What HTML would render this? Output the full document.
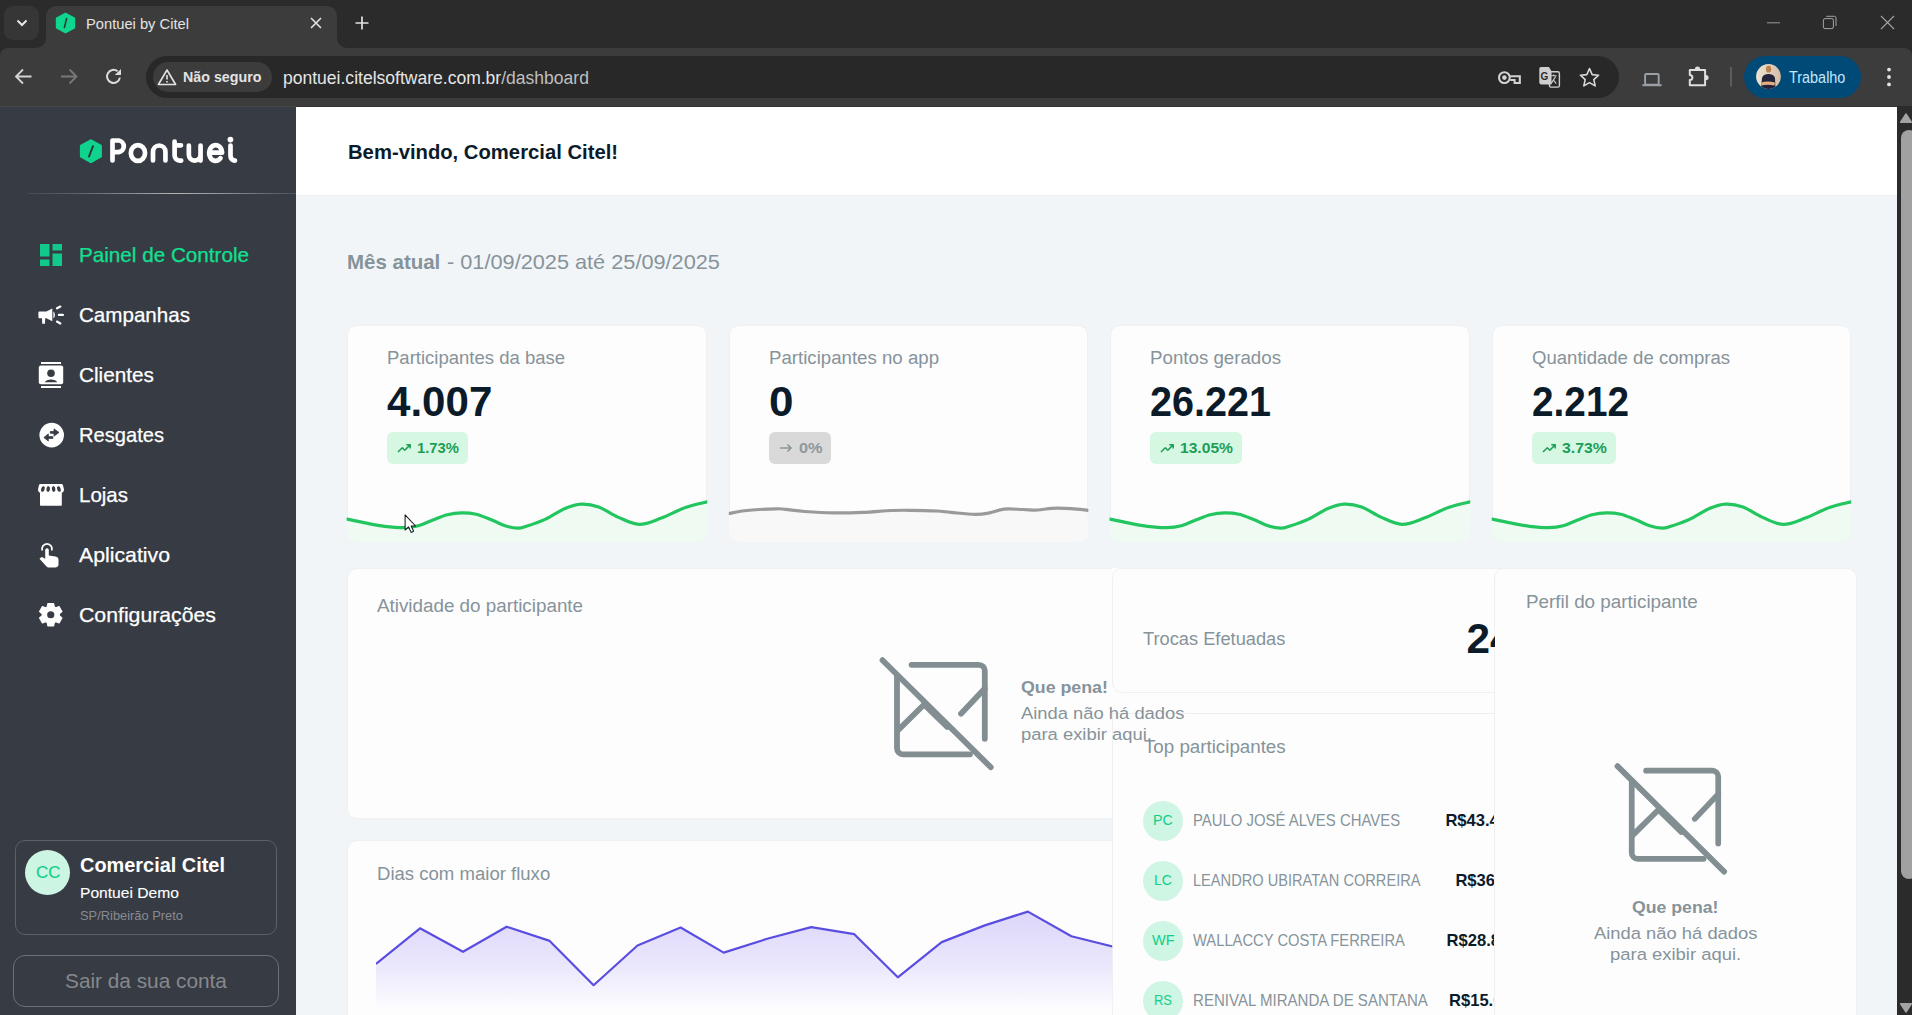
<!DOCTYPE html>
<html><head><meta charset="utf-8"><title>Pontuei by Citel</title>
<style>
html,body{margin:0;padding:0;width:1912px;height:1015px;overflow:hidden;background:#2b2b2b;font-family:"Liberation Sans",sans-serif;}
.a{position:absolute;}
.t{position:absolute;white-space:pre;}
svg{overflow:visible;}
</style></head><body>
<div class="a" style="left:0.00px;top:0.00px;width:1912.00px;height:48.00px;background:#2b2b2b;"></div>
<div class="a" style="left:4.00px;top:6.00px;width:35.00px;height:34.00px;background:#363636;border-radius:9px;"></div>
<svg class="a" style="left:14px;top:16px" width="16" height="14" viewBox="0 0 16 14"><path d="M3.5 4.5 L8 9 L12.5 4.5" fill="none" stroke="#e6e6e6" stroke-width="2"/></svg>
<div class="a" style="left:46.00px;top:6.00px;width:291.00px;height:42.00px;background:#3c3c3c;border-radius:10px 10px 0 0;"></div>
<svg class="a" style="left:36px;top:38px" width="10" height="10" viewBox="0 0 10 10"><path d="M0 10 A10 10 0 0 0 10 0 V10 Z" fill="#3c3c3c"/></svg>
<svg class="a" style="left:337px;top:38px" width="10" height="10" viewBox="0 0 10 10"><path d="M10 10 A10 10 0 0 1 0 0 V10 Z" fill="#3c3c3c"/></svg>
<svg class="a" style="left:55px;top:12px" width="21" height="22" viewBox="0 0 21 22"><path d="M10.5 1.6 L19.3 6.4 V15.6 L10.5 20.4 L1.7 15.6 V6.4 Z" fill="#0fd68f" stroke="#0fd68f" stroke-width="1.8" stroke-linejoin="round"/><path d="M11.6 6.5 L9.4 15.5" stroke="#2d3a36" stroke-width="1.6" stroke-linecap="round"/></svg>
<div class="t" style="left:86.00px;top:17.39px;font-size:14.60px;line-height:14.60px;color:#e3e3e3;transform:scaleX(1.0073);transform-origin:left top;">Pontuei by Citel</div>
<svg class="a" style="left:309px;top:16px" width="14" height="14" viewBox="0 0 14 14"><path d="M2 2 L12 12 M12 2 L2 12" stroke="#e3e3e3" stroke-width="1.6"/></svg>
<svg class="a" style="left:354px;top:15px" width="16" height="16" viewBox="0 0 16 16"><path d="M8 1.5 V14.5 M1.5 8 H14.5" stroke="#e3e3e3" stroke-width="1.7"/></svg>
<svg class="a" style="left:1760px;top:10px" width="140" height="26" viewBox="0 0 140 26"><path d="M7 12.8 H20" stroke="#9a9a9a" stroke-width="1"/><rect x="63.4" y="8.6" width="10" height="10" rx="1.6" fill="none" stroke="#a0a4a8" stroke-width="1"/><path d="M66.2 6.3 H74.4 A1.6 1.6 0 0 1 76 7.9 V16" fill="none" stroke="#a0a4a8" stroke-width="1"/><path d="M121 6 L134 19 M134 6 L121 19" stroke="#a0a4a8" stroke-width="1.1"/></svg>
<div class="a" style="left:0.00px;top:48.00px;width:1912.00px;height:58.00px;background:#3c3c3c;border-radius:8px 8px 0 0;"></div>
<svg class="a" style="left:12px;top:65px" width="130" height="24" viewBox="0 0 130 24"><path d="M19.5 11.5 H4.5 M11 4.5 L4 11.5 L11 18.5" fill="none" stroke="#d4d4d4" stroke-width="1.8"/><path d="M49 11.5 H64 M57.5 4.5 L64.5 11.5 L57.5 18.5" fill="none" stroke="#787878" stroke-width="1.8"/><path d="M107.9 12.6 A6.5 6.5 0 1 1 105.6 6.3" fill="none" stroke="#dcdcdc" stroke-width="2"/><path d="M109 4.1 V10 H102.8 Z" fill="#dcdcdc"/></svg>
<div class="a" style="left:146.00px;top:56.00px;width:1473.00px;height:42.00px;background:#282828;border-radius:21px;"></div>
<div class="a" style="left:152.50px;top:62.00px;width:119.50px;height:30.00px;background:#3c3c3c;border-radius:15px;"></div>
<svg class="a" style="left:157px;top:68px" width="20" height="18" viewBox="0 0 20 18"><path d="M10 2 L18.6 16.5 H1.4 Z" fill="none" stroke="#e3e3e3" stroke-width="1.6" stroke-linejoin="round"/><path d="M10 7 V11.5 M10 13 V14.6" stroke="#e3e3e3" stroke-width="1.6"/></svg>
<div class="t" style="left:183.00px;top:69.38px;font-size:15.20px;line-height:15.20px;color:#e3e3e3;font-weight:700;transform:scaleX(0.9388);transform-origin:left top;">Não seguro</div>
<div class="t" style="left:283.00px;top:69.95px;font-size:17.60px;line-height:17.60px;color:#e6e6e6;transform:scaleX(0.9961);transform-origin:left top;">pontuei.citelsoftware.com.br<span style="color:#bfbfbf">/dashboard</span></div>
<svg class="a" style="left:0;top:0" width="1912" height="106" viewBox="0 0 1912 106"><g fill="none" stroke="#d2d2d2" stroke-width="2.1"><circle cx="1504.4" cy="77.6" r="5.4"/><path d="M1510.2 76.2 H1519.8 V83 H1514.6 V80 H1510.2"/></g><circle cx="1504.4" cy="77.6" r="2.3" fill="#d2d2d2"/><path d="M1541 67 H1549 L1551.5 71.2 V84.4 H1541 A1.8 1.8 0 0 1 1539.3 82.6 V68.8 A1.8 1.8 0 0 1 1541 67 Z" fill="#cfcfcf"/><text x="1540.6" y="80.3" font-family="Liberation Sans" font-weight="700" font-size="10" fill="#2b2b2b">G</text><rect x="1549.4" y="71.8" width="10" height="15.3" rx="1.6" fill="none" stroke="#cfcfcf" stroke-width="1.4"/><path d="M1550.6 75.8 H1556.6 M1553.6 74.4 V75.8 M1551.2 83.4 L1555.6 76.6 M1553.2 79.6 L1556.2 83.6" fill="none" stroke="#cfcfcf" stroke-width="1.1"/><path d="M1589.5 68.6 L1592.2 74.6 L1598.6 75.2 L1593.8 79.6 L1595.2 85.9 L1589.5 82.6 L1583.8 85.9 L1585.2 79.6 L1580.4 75.2 L1586.8 74.6 Z" fill="none" stroke="#d8d8d8" stroke-width="1.6" stroke-linejoin="round"/><rect x="1645.1" y="74" width="13.6" height="10.6" rx="1.2" fill="none" stroke="#9aa0a6" stroke-width="1.9"/><path d="M1642.4 85.2 H1661.6" stroke="#9aa0a6" stroke-width="2"/><path d="M1689.8 69.9 H1705.1 V85.2 H1689.8 V80.1 A2.6 2.6 0 0 0 1689.8 74.9 Z" fill="none" stroke="#dedede" stroke-width="2" stroke-linejoin="round"/><path d="M1694.9 69 A2.6 2.6 0 0 1 1700.1 69 Z M1706 74.9 A2.6 2.6 0 0 1 1706 80.1 Z" fill="#dedede"/><path d="M1731 67 V86.4" stroke="#5a5f63" stroke-width="1.9"/></svg>
<div class="a" style="left:1743.60px;top:55.70px;width:117.00px;height:42.00px;background:#004a77;border-radius:21px;"></div>
<svg class="a" style="left:1756px;top:63.6px" width="25" height="25" viewBox="0 0 25 25"><defs><clipPath id="av"><circle cx="12.5" cy="12.5" r="12.4"/></clipPath><linearGradient id="avg" x1="0" x2="1"><stop offset="0" stop-color="#ece3d2"/><stop offset="1" stop-color="#d6bea6"/></linearGradient></defs><g clip-path="url(#av)"><rect width="25" height="25" fill="url(#avg)"/><path d="M5 25 L6 14 C7 11 9 10 12.5 10 C16 10 18 11 19 14 L19.5 25 Z" fill="#23243a"/><ellipse cx="12.6" cy="5.2" rx="2.6" ry="3.4" fill="#b9824e"/><path d="M5.5 18.5 C9 17 14 17 19 18.6 L18.5 21.5 C14 20.5 9 20.5 5.5 21.5 Z" fill="#e0ae82"/></g></svg>
<div class="t" style="left:1789.00px;top:69.64px;font-size:15.60px;line-height:15.60px;color:#c2e7ff;transform:scaleX(0.9247);transform-origin:left top;">Trabalho</div>
<svg class="a" style="left:1882px;top:66px" width="14" height="22" viewBox="0 0 14 22"><circle cx="7" cy="3.6" r="1.9" fill="#e3e3e3"/><circle cx="7" cy="11" r="1.9" fill="#e3e3e3"/><circle cx="7" cy="18.4" r="1.9" fill="#e3e3e3"/></svg>
<div class="a" style="left:0.00px;top:106.00px;width:296.00px;height:909.00px;background:#373b44;"></div>
<div class="a" style="left:0.00px;top:106.00px;width:296.00px;height:1.00px;background:#454847;"></div>
<svg class="a" style="left:79px;top:139px" width="24" height="25" viewBox="0 0 24 25"><path d="M11.9 1.6 L21.6 6.9 V17.4 L11.9 22.8 L2.2 17.4 V6.9 Z" fill="#10d38e" stroke="#10d38e" stroke-width="2.6" stroke-linejoin="round"/><path d="M14 7.2 L10 17.5" stroke="#2b3b3a" stroke-width="2" stroke-linecap="round"/></svg>
<svg class="a" style="left:0;top:0" width="300" height="200" viewBox="0 0 300 200"><g fill="none" stroke="#ffffff" stroke-width="4.7" stroke-linecap="round" stroke-linejoin="round"><path d="M112.5 160.5 V140.5 H118.7 A5.85 5.85 0 0 1 118.7 152.1 H112.5"/><ellipse cx="137.95" cy="153" rx="7.1" ry="7.9"/><path d="M153 160.5 V152 A6.22 6.5 0 0 1 165.45 152 V160.5"/><path d="M174.6 141.5 V155.6 A5 5 0 0 0 179.6 160.6 H181.2 M174.6 145.35 H181"/><path d="M188.85 145.6 V154.8 A5.85 5.85 0 0 0 200.55 154.8 V145.6 M200.55 154.8 V160.6"/><path d="M209.3 152.7 H222.1 A6.45 7.9 0 1 0 220.5 158.2"/><path d="M230.5 145.6 V156.1 A4.5 4.5 0 0 0 235 160.6"/></g><circle cx="230.4" cy="139.6" r="2.9" fill="#fff"/></svg>
<div class="a" style="left:27.00px;top:193.00px;width:269.00px;height:1.00px;background:linear-gradient(90deg, #464a50, #5d666c 20%, #8a9294 40%, #b4b4b4 55%, #8f9a9c 72%, #5f686e 90%, #4e555b);"></div>
<div class="t" style="left:78.60px;top:244.37px;font-size:21.00px;line-height:21.00px;color:#10e090;transform:scaleX(0.9839);transform-origin:left top;-webkit-text-stroke:0.25px #10e090;">Painel de Controle</div>
<div class="t" style="left:78.60px;top:304.37px;font-size:21.00px;line-height:21.00px;color:#ffffff;transform:scaleX(0.9803);transform-origin:left top;-webkit-text-stroke:0.25px #ffffff;">Campanhas</div>
<div class="t" style="left:78.60px;top:364.37px;font-size:21.00px;line-height:21.00px;color:#ffffff;transform:scaleX(0.9885);transform-origin:left top;-webkit-text-stroke:0.25px #ffffff;">Clientes</div>
<div class="t" style="left:78.60px;top:424.37px;font-size:21.00px;line-height:21.00px;color:#ffffff;transform:scaleX(0.9581);transform-origin:left top;-webkit-text-stroke:0.25px #ffffff;">Resgates</div>
<div class="t" style="left:78.60px;top:484.37px;font-size:21.00px;line-height:21.00px;color:#ffffff;transform:scaleX(0.9760);transform-origin:left top;-webkit-text-stroke:0.25px #ffffff;">Lojas</div>
<div class="t" style="left:78.60px;top:544.37px;font-size:21.00px;line-height:21.00px;color:#ffffff;transform:scaleX(1.0125);transform-origin:left top;-webkit-text-stroke:0.25px #ffffff;">Aplicativo</div>
<div class="t" style="left:78.60px;top:604.37px;font-size:21.00px;line-height:21.00px;color:#ffffff;transform:scaleX(1.0117);transform-origin:left top;-webkit-text-stroke:0.25px #ffffff;">Configurações</div>
<svg class="a" style="left:40px;top:244px" width="22" height="22" viewBox="0 0 22 22" fill="#10c98a"><rect x="0" y="0" width="9.5" height="12.5"/><rect x="12.5" y="0" width="9.5" height="6.5"/><rect x="0" y="15.5" width="9.5" height="6.5"/><rect x="12.5" y="9.5" width="9.5" height="12.5"/></svg>
<svg class="a" style="left:0;top:0" width="300" height="700"><g fill="#ffffff"><path d="M39.4 311.6 H46.4 L52.3 308.6 V321.3 L46.4 318.3 H39.4 A1 1 0 0 1 38.4 317.3 V312.6 A1 1 0 0 1 39.4 311.6 Z"/><path d="M42 317.8 H45.2 L45 323.7 H42.2 Z"/><path d="M53.4 311.4 C55 312.5 55.8 316.5 53.4 318.6 Z"/></g><g stroke="#ffffff" stroke-width="2.3" stroke-linecap="round"><path d="M57 308.3 L60.3 306.6"/><path d="M58.9 314.9 H62.9"/><path d="M57 321.6 L60.3 323.4"/></g></svg>
<svg class="a" style="left:0;top:0" width="300" height="700"><g fill="#ffffff"><rect x="41" y="362" width="20" height="2"/><rect x="41" y="386" width="20" height="2"/><rect x="38.8" y="365.6" width="24.4" height="18.6" rx="2"/></g><circle cx="51" cy="373.3" r="3.8" fill="#373b44"/><path d="M44.8 382.3 C45.8 380.2 48 379.4 51 379.4 C54 379.4 56.2 380.2 57.2 382.3 Z" fill="#373b44"/></svg>
<svg class="a" style="left:38.5px;top:422px" width="25" height="26" viewBox="0 0 25 26"><circle cx="12.7" cy="13.1" r="12.3" fill="#ffffff"/><g fill="#373b44" stroke="#373b44" stroke-linejoin="round" stroke-width="0.8"><path d="M11.3 9.5 H15.8 V11.3 H11.3 Z"/><path d="M20 10.4 L15 6.9 V14.1 Z"/><path d="M9.3 14.6 H13.9 V16.4 H9.3 Z"/><path d="M4.9 15.5 L9.3 11.9 V19 Z"/></g></svg>
<svg class="a" style="left:0;top:0" width="300" height="700"><g fill="#ffffff"><path d="M40.5 484 H61.4 A1.6 1.6 0 0 1 62.9 485 L64 489.5 C64 491.5 62.6 493 60.8 493 H41.2 C39.4 493 38 491.5 38 489.5 L39 485 A1.6 1.6 0 0 1 40.5 484 Z"/><rect x="40" y="492.5" width="21.8" height="13.3" rx="0.8"/></g><g fill="#373b44"><ellipse cx="42.9" cy="489" rx="1.75" ry="2.9" transform="rotate(18 42.9 489)"/><ellipse cx="48.2" cy="489" rx="1.75" ry="2.9" transform="rotate(8 48.2 489)"/><ellipse cx="53.6" cy="489" rx="1.75" ry="2.9" transform="rotate(-8 53.6 489)"/><ellipse cx="58.9" cy="489" rx="1.75" ry="2.9" transform="rotate(-18 58.9 489)"/></g></svg>
<svg class="a" style="left:38px;top:541.5px" width="24" height="27" viewBox="0 0 24 27"><path d="M4.3 8.5 A5 5 0 1 1 13.7 8.5" fill="none" stroke="#ffffff" stroke-width="1.8"/><path d="M7.2 8 A1.8 1.8 0 0 1 10.8 8 V13.5 L17.5 14.5 C19.5 14.8 20.5 16 20.5 18 V22.5 C20.5 24.5 19 25.5 17 25.5 H11 C9.8 25.5 9 25 8.3 24.2 L1.5 16.8 L2.8 15.6 C3.5 15 4.5 15 5.2 15.5 L7.2 17 Z" fill="#ffffff"/></svg>
<svg class="a" style="left:0;top:0" width="300" height="700"><polygon points="47.88,603.51 53.62,603.51 54.26,606.90 55.80,607.79 59.05,606.64 61.92,611.62 59.30,613.86 59.30,615.64 61.92,617.88 59.05,622.86 55.80,621.71 54.26,622.60 53.62,625.99 47.88,625.99 47.24,622.60 45.70,621.71 42.45,622.86 39.58,617.88 42.20,615.64 42.20,613.86 39.58,611.62 42.45,606.64 45.70,607.79 47.24,606.90" fill="#ffffff" stroke="#ffffff" stroke-width="1.2" stroke-linejoin="round"/><circle cx="50.75" cy="614.75" r="3.6" fill="#373b44"/></svg>
<div class="a" style="left:15.00px;top:840.20px;width:261.60px;height:95.00px;background:transparent;border:1px solid #5b6069;border-radius:10px;box-sizing:border-box;"></div>
<div class="a" style="left:25px;top:850px;width:45px;height:45px;border-radius:50%;background:#cdf5e3;"></div>
<div class="t" style="left:35.50px;top:865.42px;font-size:16.57px;line-height:16.57px;color:#12cf89;transform:scaleX(1.0236);transform-origin:left top;-webkit-text-stroke:0.2px #12cf89;">CC</div>
<div class="t" style="left:80.30px;top:854.94px;font-size:20.57px;line-height:20.57px;color:#ffffff;font-weight:700;transform:scaleX(0.9682);transform-origin:left top;">Comercial Citel</div>
<div class="t" style="left:80.30px;top:885.43px;font-size:15.14px;line-height:15.14px;color:#ffffff;transform:scaleX(1.0317);transform-origin:left top;-webkit-text-stroke:0.12px #ffffff;">Pontuei Demo</div>
<div class="t" style="left:80.30px;top:909.83px;font-size:12.43px;line-height:12.43px;color:#878b90;transform:scaleX(1.0354);transform-origin:left top;">SP/Ribeirão Preto</div>
<div class="a" style="left:13.00px;top:955.00px;width:266.00px;height:52.30px;background:transparent;border:1.3px solid #6c7176;border-radius:12px;box-sizing:border-box;"></div>
<div class="t" style="left:65.00px;top:971.04px;font-size:20.57px;line-height:20.57px;color:#86898c;transform:scaleX(1.0119);transform-origin:left top;">Sair da sua conta</div>
<div class="a" style="left:296.00px;top:106.00px;width:1601.00px;height:909.00px;background:#f2f5f8;"></div>
<div class="a" style="left:296.00px;top:107.00px;width:1601.00px;height:89.00px;background:#ffffff;border-bottom:1px solid #eef0f0;box-sizing:border-box;"></div>
<div class="a" style="left:296.00px;top:106.00px;width:1616.00px;height:1.00px;background:#333333;"></div>
<div class="t" style="left:347.80px;top:141.79px;font-size:20.86px;line-height:20.86px;color:#0c1b29;font-weight:700;transform:scaleX(0.9707);transform-origin:left top;">Bem-vindo, Comercial Citel!</div>
<div class="t" style="left:346.70px;top:251.66px;font-size:20.43px;line-height:20.43px;color:#86939a;font-weight:700;transform:scaleX(1.0022);transform-origin:left top;">Mês atual</div>
<div class="t" style="left:440.80px;top:251.66px;font-size:20.43px;line-height:20.43px;color:#86939a;transform:scaleX(1.0633);transform-origin:left top;"> - 01/09/2025 até 25/09/2025</div>
<div class="a" style="left:346.60px;top:325.00px;width:360.70px;height:217.10px;background:#fdfdfd;border:1px solid #f0f0f0;border-radius:10px;box-sizing:border-box;overflow:hidden;"></div>
<div class="a" style="left:728.80px;top:325.00px;width:359.60px;height:217.10px;background:#fdfdfd;border:1px solid #f0f0f0;border-radius:10px;box-sizing:border-box;overflow:hidden;"></div>
<div class="a" style="left:1109.50px;top:325.00px;width:360.75px;height:217.10px;background:#fdfdfd;border:1px solid #f0f0f0;border-radius:10px;box-sizing:border-box;overflow:hidden;"></div>
<div class="a" style="left:1491.70px;top:325.00px;width:359.50px;height:217.10px;background:#fdfdfd;border:1px solid #f0f0f0;border-radius:10px;box-sizing:border-box;overflow:hidden;"></div>
<div class="t" style="left:387.00px;top:350.03px;font-size:17.86px;line-height:17.86px;color:#86939a;transform:scaleX(1.0365);transform-origin:left top;">Participantes da base</div>
<div class="t" style="left:387.00px;top:380.70px;font-size:42.00px;line-height:42.00px;color:#0c1b29;font-weight:700;transform:scaleX(1.0019);transform-origin:left top;">4.007</div>
<div class="a" style="left:386.80px;top:432.00px;width:81.00px;height:32.00px;background:#d6f8e3;border-radius:6px;"></div>
<svg class="a" style="left:396.80px;top:442px" width="15" height="12" viewBox="0 0 15 12"><path d="M1 10 L5.3 5.7 L7.8 8.2 L12.6 3.4 M9.3 2.7 H13.2 V6.6" fill="none" stroke="#1d9e58" stroke-width="1.5" stroke-linejoin="round"/></svg>
<div class="t" style="left:417.30px;top:440.33px;font-size:15.14px;line-height:15.14px;color:#1d9e58;font-weight:700;transform:scaleX(0.9782);transform-origin:left top;">1.73%</div>
<svg class="a" style="left:0;top:0" width="1912" height="1015"><defs><clipPath id="cc0"><rect x="346.60" y="440" width="360.70" height="102.1" rx="10"/></clipPath></defs><g clip-path="url(#cc0)"><path d="M347.00 519.10 C350.04 519.73 358.97 521.70 365.24 522.90 C371.50 524.10 378.14 525.50 384.57 526.30 C391.00 527.10 398.18 527.78 403.81 527.70 C409.44 527.62 413.51 527.08 418.34 525.80 C423.17 524.52 427.94 521.85 432.77 520.00 C437.59 518.15 442.47 515.90 447.30 514.70 C452.12 513.50 456.91 512.88 461.72 512.80 C466.53 512.72 471.33 513.08 476.15 514.20 C480.98 515.32 485.85 517.57 490.68 519.50 C495.51 521.43 500.62 524.35 505.11 525.80 C509.60 527.25 514.09 528.12 517.63 528.20 C521.17 528.28 521.69 527.82 526.35 526.30 C531.01 524.78 539.16 522.07 545.59 519.10 C552.02 516.13 558.96 511.00 564.92 508.50 C570.89 506.00 575.73 504.35 581.36 504.10 C586.98 503.85 592.59 504.83 598.69 507.00 C604.78 509.17 611.18 514.20 617.93 517.10 C624.67 520.00 631.94 524.23 639.17 524.40 C646.40 524.57 653.60 520.92 661.31 518.10 C669.03 515.28 677.74 510.23 685.46 507.50 C693.17 504.77 703.91 502.67 707.60 501.70 L707.30 542.1 L346.60 542.1 Z" fill="#effbf2"/><path d="M347.00 519.10 C350.04 519.73 358.97 521.70 365.24 522.90 C371.50 524.10 378.14 525.50 384.57 526.30 C391.00 527.10 398.18 527.78 403.81 527.70 C409.44 527.62 413.51 527.08 418.34 525.80 C423.17 524.52 427.94 521.85 432.77 520.00 C437.59 518.15 442.47 515.90 447.30 514.70 C452.12 513.50 456.91 512.88 461.72 512.80 C466.53 512.72 471.33 513.08 476.15 514.20 C480.98 515.32 485.85 517.57 490.68 519.50 C495.51 521.43 500.62 524.35 505.11 525.80 C509.60 527.25 514.09 528.12 517.63 528.20 C521.17 528.28 521.69 527.82 526.35 526.30 C531.01 524.78 539.16 522.07 545.59 519.10 C552.02 516.13 558.96 511.00 564.92 508.50 C570.89 506.00 575.73 504.35 581.36 504.10 C586.98 503.85 592.59 504.83 598.69 507.00 C604.78 509.17 611.18 514.20 617.93 517.10 C624.67 520.00 631.94 524.23 639.17 524.40 C646.40 524.57 653.60 520.92 661.31 518.10 C669.03 515.28 677.74 510.23 685.46 507.50 C693.17 504.77 703.91 502.67 707.60 501.70" fill="none" stroke="#22c55e" stroke-width="3.2" stroke-linecap="round"/></g></svg>
<div class="t" style="left:768.50px;top:350.03px;font-size:17.86px;line-height:17.86px;color:#86939a;transform:scaleX(1.0442);transform-origin:left top;">Participantes no app</div>
<div class="t" style="left:768.50px;top:380.70px;font-size:42.00px;line-height:42.00px;color:#0c1b29;font-weight:700;transform:scaleX(1.0489);transform-origin:left top;">0</div>
<div class="a" style="left:769.00px;top:432.00px;width:61.70px;height:32.00px;background:#d9d9d9;border-radius:6px;"></div>
<svg class="a" style="left:778.50px;top:442px" width="16" height="12" viewBox="0 0 16 12"><path d="M1 6 H12 M8.5 2.5 L12 6 L8.5 9.5" fill="none" stroke="#8c979d" stroke-width="1.6"/></svg>
<div class="t" style="left:799.20px;top:440.33px;font-size:15.14px;line-height:15.14px;color:#8c979d;font-weight:700;transform:scaleX(1.0783);transform-origin:left top;">0%</div>
<svg class="a" style="left:0;top:0" width="1912" height="1015"><defs><clipPath id="cc1"><rect x="728.80" y="440" width="359.60" height="102.1" rx="10"/></clipPath></defs><g clip-path="url(#cc1)"><path d="M729.00 513.40 C732.03 512.92 739.34 511.27 747.18 510.50 C755.02 509.73 769.64 508.98 776.05 508.80 C782.46 508.62 780.83 508.95 785.64 509.40 C790.45 509.85 796.89 510.92 804.92 511.50 C812.94 512.08 824.18 512.75 833.78 512.90 C843.39 513.05 852.95 512.80 862.55 512.40 C872.16 512.00 883.39 510.85 891.42 510.50 C899.44 510.15 903.16 510.22 910.70 510.30 C918.24 510.38 929.94 510.65 936.67 511.00 C943.39 511.35 944.64 511.83 951.05 512.40 C957.46 512.97 968.72 514.32 975.13 514.40 C981.54 514.48 984.72 513.78 989.51 512.90 C994.30 512.02 998.28 509.67 1003.89 509.10 C1009.50 508.53 1017.56 509.35 1023.17 509.50 C1028.78 509.65 1032.75 510.20 1037.56 510.00 C1042.37 509.80 1046.43 508.53 1052.04 508.30 C1057.65 508.07 1065.29 508.27 1071.22 508.60 C1077.15 508.93 1084.87 510.02 1087.60 510.30 L1088.40 542.1 L728.80 542.1 Z" fill="#f8f8f8"/><path d="M729.00 513.40 C732.03 512.92 739.34 511.27 747.18 510.50 C755.02 509.73 769.64 508.98 776.05 508.80 C782.46 508.62 780.83 508.95 785.64 509.40 C790.45 509.85 796.89 510.92 804.92 511.50 C812.94 512.08 824.18 512.75 833.78 512.90 C843.39 513.05 852.95 512.80 862.55 512.40 C872.16 512.00 883.39 510.85 891.42 510.50 C899.44 510.15 903.16 510.22 910.70 510.30 C918.24 510.38 929.94 510.65 936.67 511.00 C943.39 511.35 944.64 511.83 951.05 512.40 C957.46 512.97 968.72 514.32 975.13 514.40 C981.54 514.48 984.72 513.78 989.51 512.90 C994.30 512.02 998.28 509.67 1003.89 509.10 C1009.50 508.53 1017.56 509.35 1023.17 509.50 C1028.78 509.65 1032.75 510.20 1037.56 510.00 C1042.37 509.80 1046.43 508.53 1052.04 508.30 C1057.65 508.07 1065.29 508.27 1071.22 508.60 C1077.15 508.93 1084.87 510.02 1087.60 510.30" fill="none" stroke="#9a9a9a" stroke-width="3.2" stroke-linecap="round"/></g></svg>
<div class="t" style="left:1150.20px;top:350.03px;font-size:17.86px;line-height:17.86px;color:#86939a;transform:scaleX(1.0473);transform-origin:left top;">Pontos gerados</div>
<div class="t" style="left:1150.20px;top:380.70px;font-size:42.00px;line-height:42.00px;color:#0c1b29;font-weight:700;transform:scaleX(0.9419);transform-origin:left top;">26.221</div>
<div class="a" style="left:1149.70px;top:432.00px;width:92.00px;height:32.00px;background:#d6f8e3;border-radius:6px;"></div>
<svg class="a" style="left:1159.70px;top:442px" width="15" height="12" viewBox="0 0 15 12"><path d="M1 10 L5.3 5.7 L7.8 8.2 L12.6 3.4 M9.3 2.7 H13.2 V6.6" fill="none" stroke="#1d9e58" stroke-width="1.5" stroke-linejoin="round"/></svg>
<div class="t" style="left:1180.20px;top:440.33px;font-size:15.14px;line-height:15.14px;color:#1d9e58;font-weight:700;transform:scaleX(1.0320);transform-origin:left top;">13.05%</div>
<svg class="a" style="left:0;top:0" width="1912" height="1015"><defs><clipPath id="cc2"><rect x="1109.50" y="440" width="360.75" height="102.1" rx="10"/></clipPath></defs><g clip-path="url(#cc2)"><path d="M1109.90 519.10 C1112.94 519.73 1121.88 521.70 1128.14 522.90 C1134.40 524.10 1141.05 525.50 1147.48 526.30 C1153.91 527.10 1161.09 527.78 1166.72 527.70 C1172.35 527.62 1176.42 527.08 1181.25 525.80 C1186.08 524.52 1190.85 521.85 1195.68 520.00 C1200.51 518.15 1205.38 515.90 1210.21 514.70 C1215.04 513.50 1219.83 512.88 1224.64 512.80 C1229.45 512.72 1234.24 513.08 1239.07 514.20 C1243.90 515.32 1248.77 517.57 1253.60 519.50 C1258.43 521.43 1263.54 524.35 1268.03 525.80 C1272.52 527.25 1277.01 528.12 1280.56 528.20 C1284.10 528.28 1284.61 527.82 1289.27 526.30 C1293.93 524.78 1302.08 522.07 1308.51 519.10 C1314.94 516.13 1321.89 511.00 1327.85 508.50 C1333.82 506.00 1338.66 504.35 1344.29 504.10 C1349.92 503.85 1355.53 504.83 1361.62 507.00 C1367.72 509.17 1374.12 514.20 1380.86 517.10 C1387.61 520.00 1394.88 524.23 1402.11 524.40 C1409.34 524.57 1416.54 520.92 1424.25 518.10 C1431.97 515.28 1440.69 510.23 1448.40 507.50 C1456.12 504.77 1466.86 502.67 1470.55 501.70 L1470.25 542.1 L1109.50 542.1 Z" fill="#effbf2"/><path d="M1109.90 519.10 C1112.94 519.73 1121.88 521.70 1128.14 522.90 C1134.40 524.10 1141.05 525.50 1147.48 526.30 C1153.91 527.10 1161.09 527.78 1166.72 527.70 C1172.35 527.62 1176.42 527.08 1181.25 525.80 C1186.08 524.52 1190.85 521.85 1195.68 520.00 C1200.51 518.15 1205.38 515.90 1210.21 514.70 C1215.04 513.50 1219.83 512.88 1224.64 512.80 C1229.45 512.72 1234.24 513.08 1239.07 514.20 C1243.90 515.32 1248.77 517.57 1253.60 519.50 C1258.43 521.43 1263.54 524.35 1268.03 525.80 C1272.52 527.25 1277.01 528.12 1280.56 528.20 C1284.10 528.28 1284.61 527.82 1289.27 526.30 C1293.93 524.78 1302.08 522.07 1308.51 519.10 C1314.94 516.13 1321.89 511.00 1327.85 508.50 C1333.82 506.00 1338.66 504.35 1344.29 504.10 C1349.92 503.85 1355.53 504.83 1361.62 507.00 C1367.72 509.17 1374.12 514.20 1380.86 517.10 C1387.61 520.00 1394.88 524.23 1402.11 524.40 C1409.34 524.57 1416.54 520.92 1424.25 518.10 C1431.97 515.28 1440.69 510.23 1448.40 507.50 C1456.12 504.77 1466.86 502.67 1470.55 501.70" fill="none" stroke="#22c55e" stroke-width="3.2" stroke-linecap="round"/></g></svg>
<div class="t" style="left:1532.40px;top:350.03px;font-size:17.86px;line-height:17.86px;color:#86939a;transform:scaleX(1.0388);transform-origin:left top;">Quantidade de compras</div>
<div class="t" style="left:1532.40px;top:380.70px;font-size:42.00px;line-height:42.00px;color:#0c1b29;font-weight:700;transform:scaleX(0.9229);transform-origin:left top;">2.212</div>
<div class="a" style="left:1531.90px;top:432.00px;width:84.00px;height:32.00px;background:#d6f8e3;border-radius:6px;"></div>
<svg class="a" style="left:1541.90px;top:442px" width="15" height="12" viewBox="0 0 15 12"><path d="M1 10 L5.3 5.7 L7.8 8.2 L12.6 3.4 M9.3 2.7 H13.2 V6.6" fill="none" stroke="#1d9e58" stroke-width="1.5" stroke-linejoin="round"/></svg>
<div class="t" style="left:1562.40px;top:440.33px;font-size:15.14px;line-height:15.14px;color:#1d9e58;font-weight:700;transform:scaleX(1.0481);transform-origin:left top;">3.73%</div>
<svg class="a" style="left:0;top:0" width="1912" height="1015"><defs><clipPath id="cc3"><rect x="1491.70" y="440" width="359.50" height="102.1" rx="10"/></clipPath></defs><g clip-path="url(#cc3)"><path d="M1492.10 519.10 C1495.13 519.73 1504.03 521.70 1510.27 522.90 C1516.52 524.10 1523.14 525.50 1529.55 526.30 C1535.96 527.10 1543.11 527.78 1548.72 527.70 C1554.33 527.62 1558.39 527.08 1563.20 525.80 C1568.01 524.52 1572.77 521.85 1577.58 520.00 C1582.39 518.15 1587.25 515.90 1592.06 514.70 C1596.87 513.50 1601.65 512.88 1606.44 512.80 C1611.23 512.72 1616.01 513.08 1620.82 514.20 C1625.63 515.32 1630.49 517.57 1635.30 519.50 C1640.11 521.43 1645.20 524.35 1649.68 525.80 C1654.16 527.25 1658.63 528.12 1662.16 528.20 C1665.69 528.28 1666.21 527.82 1670.85 526.30 C1675.49 524.78 1683.62 522.07 1690.02 519.10 C1696.43 516.13 1703.36 511.00 1709.30 508.50 C1715.24 506.00 1720.07 504.35 1725.67 504.10 C1731.28 503.85 1736.88 504.83 1742.95 507.00 C1749.03 509.17 1755.40 514.20 1762.12 517.10 C1768.85 520.00 1776.09 524.23 1783.29 524.40 C1790.50 524.57 1797.67 520.92 1805.36 518.10 C1813.05 515.28 1821.74 510.23 1829.43 507.50 C1837.12 504.77 1847.82 502.67 1851.50 501.70 L1851.20 542.1 L1491.70 542.1 Z" fill="#effbf2"/><path d="M1492.10 519.10 C1495.13 519.73 1504.03 521.70 1510.27 522.90 C1516.52 524.10 1523.14 525.50 1529.55 526.30 C1535.96 527.10 1543.11 527.78 1548.72 527.70 C1554.33 527.62 1558.39 527.08 1563.20 525.80 C1568.01 524.52 1572.77 521.85 1577.58 520.00 C1582.39 518.15 1587.25 515.90 1592.06 514.70 C1596.87 513.50 1601.65 512.88 1606.44 512.80 C1611.23 512.72 1616.01 513.08 1620.82 514.20 C1625.63 515.32 1630.49 517.57 1635.30 519.50 C1640.11 521.43 1645.20 524.35 1649.68 525.80 C1654.16 527.25 1658.63 528.12 1662.16 528.20 C1665.69 528.28 1666.21 527.82 1670.85 526.30 C1675.49 524.78 1683.62 522.07 1690.02 519.10 C1696.43 516.13 1703.36 511.00 1709.30 508.50 C1715.24 506.00 1720.07 504.35 1725.67 504.10 C1731.28 503.85 1736.88 504.83 1742.95 507.00 C1749.03 509.17 1755.40 514.20 1762.12 517.10 C1768.85 520.00 1776.09 524.23 1783.29 524.40 C1790.50 524.57 1797.67 520.92 1805.36 518.10 C1813.05 515.28 1821.74 510.23 1829.43 507.50 C1837.12 504.77 1847.82 502.67 1851.50 501.70" fill="none" stroke="#22c55e" stroke-width="3.2" stroke-linecap="round"/></g></svg>
<div class="a" style="left:346.60px;top:568.00px;width:783.40px;height:251.20px;background:#fdfdfd;border:1px solid #f0f0f0;border-radius:10px;box-sizing:border-box;"></div>
<div class="a" style="left:346.60px;top:840.00px;width:783.40px;height:200.00px;background:#fdfdfd;border:1px solid #f0f0f0;border-radius:10px;box-sizing:border-box;"></div>
<div class="a" style="left:1112.20px;top:568.00px;width:382.30px;height:447.00px;background:#fdfdfd;"></div>
<div class="a" style="left:1112.20px;top:568.00px;width:407.80px;height:125.20px;background:#fdfdfd;border:1px solid #f0f0f0;border-radius:10px;box-sizing:border-box;"></div>
<div class="a" style="left:1112.20px;top:713.00px;width:417.80px;height:327.00px;background:#fdfdfd;border:1px solid #efefef;border-radius:0;box-sizing:border-box;"></div>
<div class="a" style="left:1494.10px;top:568.00px;width:362.50px;height:472.00px;background:#fdfdfd;border:1px solid #f0f0f0;border-radius:10px;box-sizing:border-box;"></div>
<div class="t" style="left:377.30px;top:598.03px;font-size:17.86px;line-height:17.86px;color:#86939a;transform:scaleX(1.0534);transform-origin:left top;">Atividade do participante</div>
<svg class="a" style="left:880.00px;top:656.90px" width="113.00" height="113.00" viewBox="0 0 113 113"><g fill="none" stroke="#838e93" stroke-width="5.8" stroke-linecap="round" stroke-linejoin="round"><path d="M31.6 7.8 H98.8 A6 6 0 0 1 104.8 13.8 V81.8"/><path d="M17 19 V91.3 A6 6 0 0 0 23 97.3 H90"/><path d="M17.8 73.5 L44.1 47.5 L67.2 70"/><path d="M81 56.7 L104.8 31.6"/><path d="M2.5 3.2 L110.8 110.3"/></g></svg>
<div class="t" style="left:1021.20px;top:678.94px;font-size:17.14px;line-height:17.14px;color:#86939a;font-weight:700;transform:scaleX(1.0379);transform-origin:left top;">Que pena!</div>
<div class="t" style="left:1021.20px;top:704.94px;font-size:17.14px;line-height:17.14px;color:#86939a;transform:scaleX(1.0727);transform-origin:left top;">Ainda não há dados</div>
<div class="t" style="left:1021.20px;top:725.94px;font-size:17.14px;line-height:17.14px;color:#86939a;transform:scaleX(1.0740);transform-origin:left top;">para exibir aqui.</div>
<div class="t" style="left:1143.20px;top:629.77px;font-size:18.29px;line-height:18.29px;color:#86939a;transform:scaleX(0.9984);transform-origin:left top;">Trocas Efetuadas</div>
<div class="a" style="left:1112px;top:560px;width:382.5px;height:120px;overflow:hidden;"><div class="t" style="left:354.50px;top:57.66px;font-size:42.29px;line-height:42.29px;color:#0c1b29;font-weight:700;">24</div></div>
<div class="t" style="left:1144.00px;top:737.97px;font-size:18.29px;line-height:18.29px;color:#86939a;transform:scaleX(1.0250);transform-origin:left top;">Top participantes</div>
<div class="a" style="left:1142.8px;top:800.70px;width:40px;height:40px;border-radius:50%;background:#cff5e4;"></div>
<div class="t" style="left:1153.15px;top:812.43px;font-size:15.14px;line-height:15.14px;color:#12cf88;transform:scaleX(0.9365);transform-origin:left top;">PC</div>
<div class="t" style="left:1192.60px;top:812.72px;font-size:16.57px;line-height:16.57px;color:#86939a;transform:scaleX(0.8999);transform-origin:left top;">PAULO JOSÉ ALVES CHAVES</div>
<div class="a" style="left:1142.8px;top:860.70px;width:40px;height:40px;border-radius:50%;background:#cff5e4;"></div>
<div class="t" style="left:1154.00px;top:872.43px;font-size:15.14px;line-height:15.14px;color:#12cf88;transform:scaleX(0.9299);transform-origin:left top;">LC</div>
<div class="t" style="left:1192.60px;top:872.72px;font-size:16.57px;line-height:16.57px;color:#86939a;transform:scaleX(0.8818);transform-origin:left top;">LEANDRO UBIRATAN CORREIRA</div>
<div class="a" style="left:1142.8px;top:920.70px;width:40px;height:40px;border-radius:50%;background:#cff5e4;"></div>
<div class="t" style="left:1151.65px;top:932.43px;font-size:15.14px;line-height:15.14px;color:#12cf88;transform:scaleX(0.9642);transform-origin:left top;">WF</div>
<div class="t" style="left:1192.60px;top:932.72px;font-size:16.57px;line-height:16.57px;color:#86939a;transform:scaleX(0.8900);transform-origin:left top;">WALLACCY COSTA FERREIRA</div>
<div class="a" style="left:1142.8px;top:980.70px;width:40px;height:40px;border-radius:50%;background:#cff5e4;"></div>
<div class="t" style="left:1154.00px;top:992.43px;font-size:15.14px;line-height:15.14px;color:#12cf88;transform:scaleX(0.8557);transform-origin:left top;">RS</div>
<div class="t" style="left:1192.60px;top:992.72px;font-size:16.57px;line-height:16.57px;color:#86939a;transform:scaleX(0.9093);transform-origin:left top;">RENIVAL MIRANDA DE SANTANA</div>
<div class="a" style="left:1112px;top:780px;width:382px;height:235px;overflow:hidden;"><div class="t" style="left:333.40px;top:32.72px;font-size:16.57px;line-height:16.57px;color:#0c1b29;font-weight:700;">R$43.456,78</div>
<div class="t" style="left:343.40px;top:92.72px;font-size:16.57px;line-height:16.57px;color:#0c1b29;font-weight:700;">R$36.123,45</div>
<div class="t" style="left:334.60px;top:152.72px;font-size:16.57px;line-height:16.57px;color:#0c1b29;font-weight:700;">R$28.876,54</div>
<div class="t" style="left:337.00px;top:212.72px;font-size:16.57px;line-height:16.57px;color:#0c1b29;font-weight:700;">R$15.012,34</div></div>
<div class="t" style="left:1525.70px;top:593.73px;font-size:17.86px;line-height:17.86px;color:#86939a;transform:scaleX(1.0547);transform-origin:left top;">Perfil do participante</div>
<svg class="a" style="left:1615.40px;top:763.00px" width="111.30" height="111.30" viewBox="0 0 113 113"><g fill="none" stroke="#838e93" stroke-width="5.8" stroke-linecap="round" stroke-linejoin="round"><path d="M31.6 7.8 H98.8 A6 6 0 0 1 104.8 13.8 V81.8"/><path d="M17 19 V91.3 A6 6 0 0 0 23 97.3 H90"/><path d="M17.8 73.5 L44.1 47.5 L67.2 70"/><path d="M81 56.7 L104.8 31.6"/><path d="M2.5 3.2 L110.8 110.3"/></g></svg>
<div class="t" style="left:1632.40px;top:898.64px;font-size:17.14px;line-height:17.14px;color:#86939a;font-weight:700;transform:scaleX(1.0319);transform-origin:left top;">Que pena!</div>
<div class="t" style="left:1594.30px;top:925.14px;font-size:17.14px;line-height:17.14px;color:#86939a;transform:scaleX(1.0727);transform-origin:left top;">Ainda não há dados</div>
<div class="t" style="left:1610.00px;top:946.24px;font-size:17.14px;line-height:17.14px;color:#86939a;transform:scaleX(1.0764);transform-origin:left top;">para exibir aqui.</div>
<div class="t" style="left:377.30px;top:865.53px;font-size:17.86px;line-height:17.86px;color:#86939a;transform:scaleX(1.0389);transform-origin:left top;">Dias com maior fluxo</div>
<svg class="a" style="left:0;top:0" width="1912" height="1015"><defs><linearGradient id="pg" x1="0" y1="0" x2="0" y2="1"><stop offset="0" stop-color="#ddd6fa"/><stop offset="0.55" stop-color="#ebe7fc"/><stop offset="1" stop-color="#fdfdff"/></linearGradient><clipPath id="pc"><rect x="376" y="880" width="736.2" height="135"/></clipPath></defs><g clip-path="url(#pc)"><path d="M376.0 963.9 L420.0 928.3 L463.0 951.8 L506.6 926.7 L549.7 940.9 L593.6 985.2 L637.5 945.5 L680.6 927.5 L723.7 952.6 L767.2 938.8 L811.2 927.1 L854.3 934.2 L897.8 977.3 L941.7 942.1 L984.8 925.4 L1027.9 911.6 L1071.4 936.3 L1115.0 947.2 L1115 1010 L376 1010 Z" fill="url(#pg)"/><path d="M376.0 963.9 L420.0 928.3 L463.0 951.8 L506.6 926.7 L549.7 940.9 L593.6 985.2 L637.5 945.5 L680.6 927.5 L723.7 952.6 L767.2 938.8 L811.2 927.1 L854.3 934.2 L897.8 977.3 L941.7 942.1 L984.8 925.4 L1027.9 911.6 L1071.4 936.3 L1115.0 947.2" fill="none" stroke="#5a4ee0" stroke-width="2.2" stroke-linejoin="round"/></g></svg>
<svg class="a" style="left:0;top:0" width="1912" height="1015"><path d="M405.1 514.9 V530 L408.5 526.8 L411.1 532.4 L413.6 531.3 L411.2 526 H415.6 Z" fill="#ffffff" stroke="#141a22" stroke-width="1.05" stroke-linejoin="round"/></svg>
<div class="a" style="left:1897.00px;top:106.00px;width:15.00px;height:909.00px;background:#2b2b2b;"></div>
<svg class="a" style="left:1897px;top:106px" width="15" height="909" viewBox="0 0 15 909"><path d="M3.6 16.2 L9 8 L14.4 16.2 Z" fill="#a3a3a3" stroke="#a3a3a3" stroke-width="1.4" stroke-linejoin="round"/><path d="M3.6 897.8 L9 906 L14.4 897.8 Z" fill="#a3a3a3" stroke="#a3a3a3" stroke-width="1.4" stroke-linejoin="round"/></svg>
<div class="a" style="left:1900.60px;top:130.00px;width:16.40px;height:749.00px;background:#a0a1a0;border-radius:8px;"></div>
</body></html>
